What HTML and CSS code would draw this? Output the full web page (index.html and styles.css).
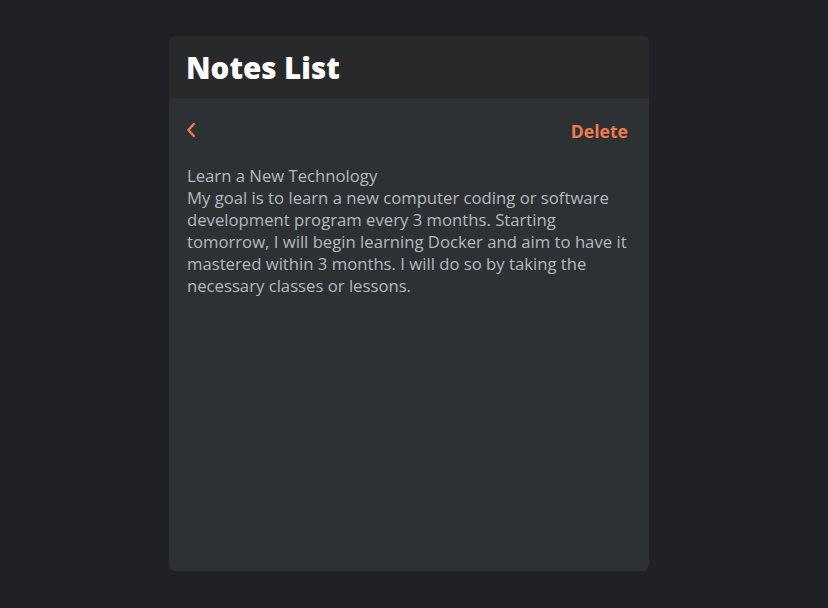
FILE: index.html
```html
<!DOCTYPE html>
<html>
<head>
<meta charset="utf-8">
<link rel="stylesheet" href="styles.css">
</head>
<body>
<div class="page">
  <div class="card">
    <header class="card-header">
      <h1 class="title">Notes List</h1>
    </header>
    <section class="card-body">
      <div class="toolbar">
        <button class="back" aria-label="Back">
          <svg width="10" height="16" viewBox="0 0 10 16"><path d="M7.8 2 L2.4 8 L7.8 14" fill="none" stroke="currentColor" stroke-width="2.4" stroke-linecap="round" stroke-linejoin="round"/></svg>
        </button>
        <button class="delete">Delete</button>
      </div>
      <div class="note">
        <p>Learn a New Technology</p>
        <p>My goal is to learn a new computer coding or software development program every 3 months. Starting tomorrow, I will begin learning Docker and aim to have it mastered within 3 months. I will do so by taking the necessary classes or lessons.</p>
      </div>
    </section>
  </div>
</div>
</body>
</html>
```
FILE: styles.css
```css
html, body {
  margin: 0;
  padding: 0;
  background: #202124;
  height: 100%;
}
.page {
  display: flex;
  justify-content: center;
  padding: 36px 10px 0 0;
}
.card {
  width: 480px;
  height: 535px;
  border-radius: 6px;
  overflow: hidden;
  background: #2e3134;
  display: flex;
  flex-direction: column;
}
.card-header {
  background: #28292b;
  height: 62px;
  display: flex;
  align-items: center;
  padding: 0 17px;
  box-sizing: border-box;
}
.title {
  margin: 0;
  font-family: "Open Sans", sans-serif;
  font-weight: 800;
  font-size: 29.5px;
  color: #ffffff;
  letter-spacing: 0;
}
.card-body {
  flex: 1;
  padding: 20px 17px 0 17px;
}
.toolbar {
  display: flex;
  justify-content: space-between;
  align-items: center;
  height: 24px;
  padding-right: 4px;
}
.back, .delete {
  background: none;
  border: none;
  padding: 0;
  color: #ef7a4d;
  cursor: pointer;
}
.back {
  display: flex;
  margin-top: 0;
}
.delete {
  font-family: "Open Sans", sans-serif;
  font-weight: 700;
  font-size: 17.6px;
  margin-top: 1px;
}
.note {
  margin-top: 23px;
  padding-left: 1px;
  font-family: "Open Sans", sans-serif;
  font-size: 16.7px;
  line-height: 22px;
  color: #b4b9c0;
}
.note p {
  margin: 0;
}
```
